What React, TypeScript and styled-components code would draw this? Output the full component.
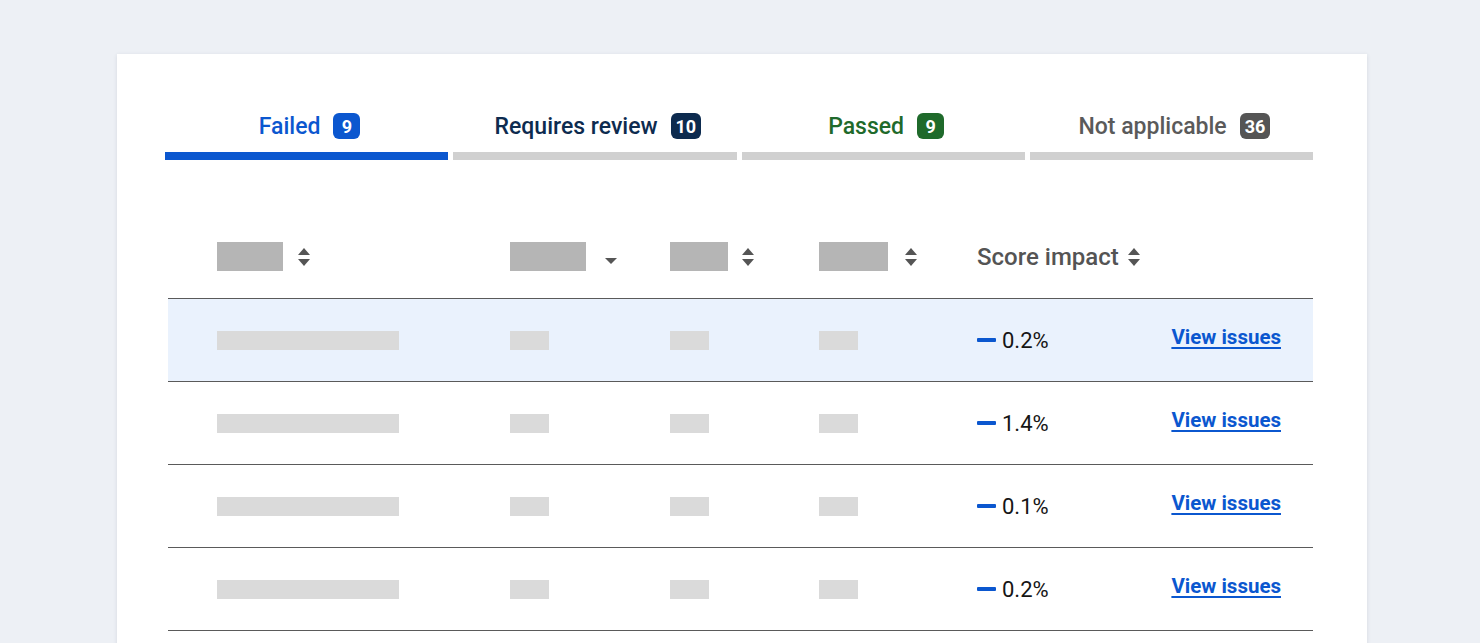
import styled, { createGlobalStyle } from "styled-components"

const GlobalStyle = createGlobalStyle`
  html, body {
    margin: 0;
    padding: 0;
    background: #edf0f5;
    font-family: Roboto, "Noto Sans", Arial, sans-serif;
    overflow: hidden;
  }
`

const StyledPage = styled.div`
  height: 643px;
  padding: 54px 113px 0 117px;
  box-sizing: border-box;
`

const StyledCard = styled.div`
  background: #fff;
  height: 700px;
  padding: 52px 54px 0 48px;
  box-shadow: 0 1px 4px rgba(40, 50, 70, 0.12);
`

const StyledTabs = styled.div`
  display: grid;
  grid-template-columns: repeat(4, 1fr);
  gap: 5px;
`

const StyledTab = styled.div<{ $active?: boolean }>`
  display: flex;
  flex-direction: column;
  align-items: center;
  gap: 6px;

  &::after {
    content: "";
    align-self: stretch;
    height: 8px;
    background: ${(p) => (p.$active ? "#0b57cf" : "#d0d0d0")};
  }
`

const StyledTabLabel = styled.div<{ $color: string }>`
  display: flex;
  align-items: center;
  gap: 13px;
  height: 40px;
  padding-left: 6px;
  font-size: 23px;
  font-weight: 500;
  color: ${(p) => p.$color};
`

const StyledBadge = styled.span<{ $bg: string }>`
  display: inline-flex;
  align-items: center;
  justify-content: center;
  min-width: 27px;
  height: 26px;
  padding: 0 5px;
  box-sizing: border-box;
  border-radius: 6px;
  background: ${(p) => p.$bg};
  color: #fff;
  font-size: 18px;
  font-weight: 700;
`

const StyledTable = styled.div`
  margin: 55px 0 0 3px;
`

const StyledRow = styled.div<{ $head?: boolean; $highlight?: boolean }>`
  display: grid;
  grid-template-columns: 293px 160px 149px 158px 1fr auto;
  align-items: center;
  height: ${(p) => (p.$head ? "83px" : "82px")};
  padding: 0 32px 0 49px;
  border-bottom: 1px solid #5a5a5a;
  background: ${(p) => (p.$highlight ? "#eaf2fd" : "transparent")};
`

const StyledHeadCell = styled.div<{ $gap: number }>`
  display: flex;
  align-items: center;
  gap: ${(p) => p.$gap}px;
  font-size: 24px;
  font-weight: 500;
  color: #545454;
`

const StyledHeadBlock = styled.div<{ $w: number }>`
  width: ${(p) => p.$w}px;
  height: 29px;
  background: #b5b5b5;
`

const StyledCellBlock = styled.div<{ $w: number }>`
  width: ${(p) => p.$w}px;
  height: 19px;
  background: #dadada;
`

const StyledScore = styled.div`
  display: flex;
  align-items: center;
  gap: 6px;
  font-size: 22px;
  color: #151515;

  &::before {
    content: "";
    width: 19px;
    height: 4px;
    border-radius: 1px;
    background: #0b57cf;
  }
`

const StyledLink = styled.a`
  font-size: 20.5px;
  font-weight: 700;
  color: #0b57cf;
  text-decoration: underline;
  text-underline-offset: 3px;
  text-decoration-thickness: 2px;
  margin-top: -6px;
  cursor: pointer;
`

function SortIcon() {
  return (
    <svg width="14" height="22" viewBox="0 0 14 22">
      <path d="M7 2 L13 9 L1 9 Z" fill="#555" />
      <path d="M1 13 L13 13 L7 20 Z" fill="#555" />
    </svg>
  )
}

function DownIcon() {
  return (
    <svg width="14" height="22" viewBox="0 0 14 22" style={{ marginTop: 4 }}>
      <path d="M1 10 L13 10 L7 16 Z" fill="#555" />
    </svg>
  )
}

const tabs = [
  { label: "Failed", count: 9, color: "#0b57cf", bg: "#0b57cf", active: true },
  { label: "Requires review", count: 10, color: "#0d2b4f", bg: "#0d2b4f" },
  { label: "Passed", count: 9, color: "#1f6a2b", bg: "#1f6a2b" },
  { label: "Not applicable", count: 36, color: "#5a5a5a", bg: "#555555" },
]

const rows = ["0.2%", "1.4%", "0.1%", "0.2%"]

export default function App() {
  return (
    <StyledPage>
      <GlobalStyle />
      <StyledCard>
        <StyledTabs>
          {tabs.map((t) => (
            <StyledTab key={t.label} $active={t.active}>
              <StyledTabLabel $color={t.color}>
                {t.label}
                <StyledBadge $bg={t.bg}>{t.count}</StyledBadge>
              </StyledTabLabel>
            </StyledTab>
          ))}
        </StyledTabs>

        <StyledTable>
          <StyledRow $head>
            <StyledHeadCell $gap={14}>
              <StyledHeadBlock $w={66} />
              <SortIcon />
            </StyledHeadCell>
            <StyledHeadCell $gap={18}>
              <StyledHeadBlock $w={76} />
              <DownIcon />
            </StyledHeadCell>
            <StyledHeadCell $gap={13}>
              <StyledHeadBlock $w={58} />
              <SortIcon />
            </StyledHeadCell>
            <StyledHeadCell $gap={16}>
              <StyledHeadBlock $w={69} />
              <SortIcon />
            </StyledHeadCell>
            <StyledHeadCell $gap={8}>
              Score impact
              <SortIcon />
            </StyledHeadCell>
            <div />
          </StyledRow>

          {rows.map((score, i) => (
            <StyledRow key={i} $highlight={i === 0}>
              <StyledCellBlock $w={182} />
              <StyledCellBlock $w={39} />
              <StyledCellBlock $w={39} />
              <StyledCellBlock $w={39} />
              <StyledScore>{score}</StyledScore>
              <StyledLink>View issues</StyledLink>
            </StyledRow>
          ))}
        </StyledTable>
      </StyledCard>
    </StyledPage>
  )
}
